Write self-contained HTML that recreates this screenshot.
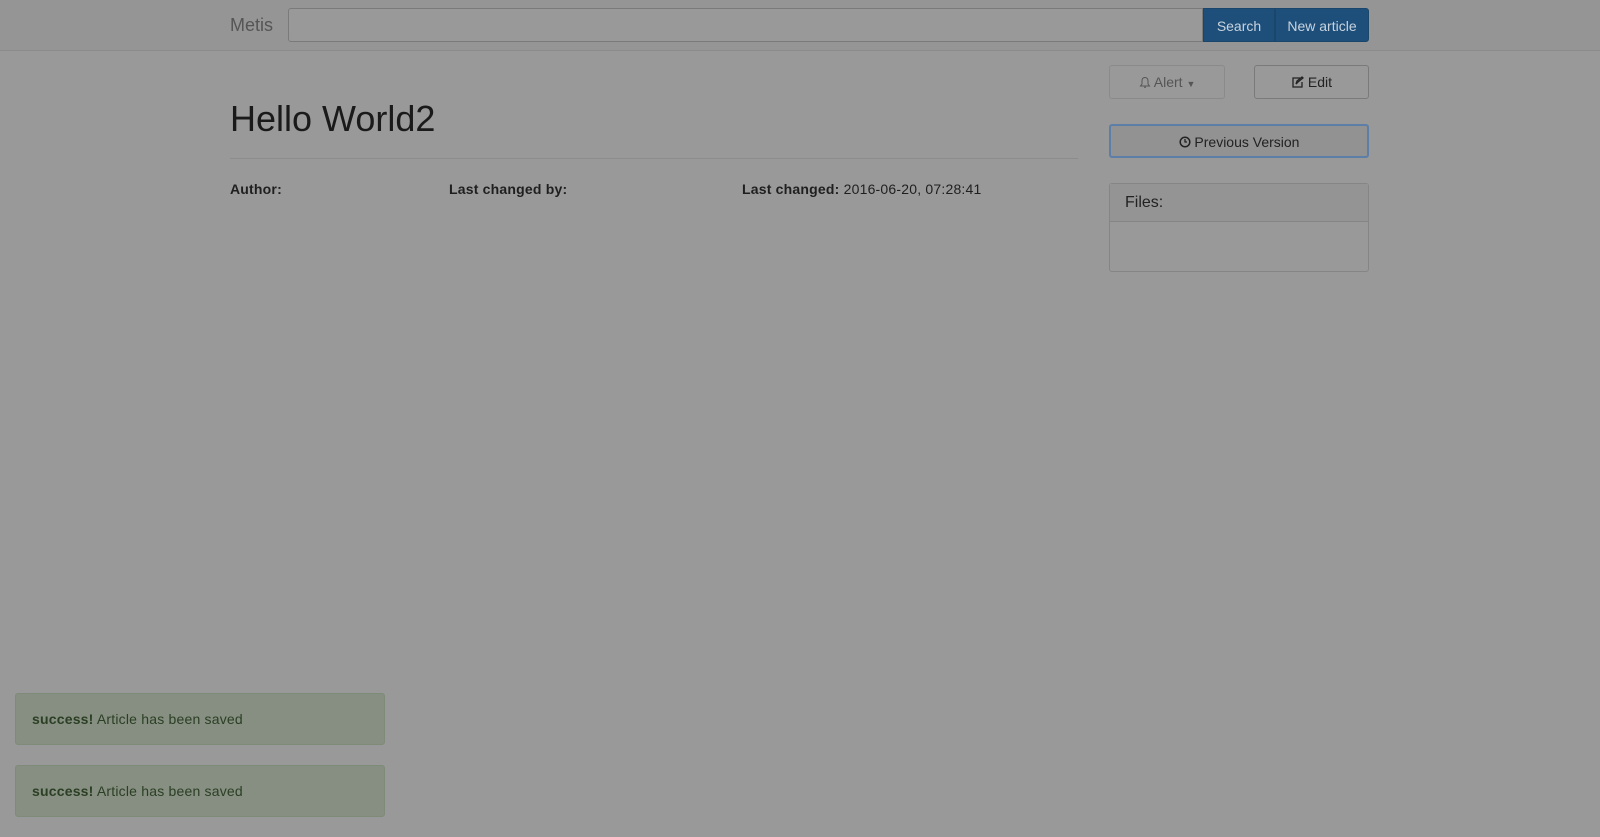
<!DOCTYPE html>
<html><head><style>
body{margin:0;width:1600px;height:837px;background:#999;font-family:"Liberation Sans",sans-serif;font-size:14px;color:#1f1f1f;position:relative;overflow:hidden}
.nav{position:absolute;left:0;top:0;width:1600px;height:50px;background:#959595;border-bottom:1px solid #8a8a8a}
.brand{position:absolute;left:230px;top:15px;font-size:18px;color:#555}
.inp{position:absolute;left:288px;top:8px;width:915px;height:34px;border:1px solid #7a7a7a;border-radius:3px 0 0 3px;background:#999;box-sizing:border-box}
.b1,.b2{position:absolute;top:8px;height:34px;background:#1e4f7a;color:#c8d3de;line-height:34px;text-align:center;box-sizing:border-box;border:1px solid #1a466b}
.b1{left:1203px;width:72px}
.b2{left:1275px;width:94px;border-radius:0 3px 3px 0}
.btn{position:absolute;border:1px solid #7a7a7a;border-radius:3px;box-sizing:border-box;text-align:center;color:#222}
h1{position:absolute;left:230px;top:98px;margin:0;font-size:36px;font-weight:normal;color:#1a1a1a}
.hr{position:absolute;left:230px;top:158px;width:848px;height:1px;background:#8c8c8c}
.meta{position:absolute;top:181px;letter-spacing:0.2px}
.panel{position:absolute;left:1109px;top:183px;width:260px;height:89px;border:1px solid #858585;border-radius:3px;box-sizing:border-box}
.ph{height:37px;background:#949494;border-bottom:1px solid #858585;font-size:16px;line-height:37px;padding-left:15px;color:#222}
.al{position:absolute;left:15px;width:370px;height:52px;background:#868f81;border:1px solid #7f8b79;border-radius:3px;box-sizing:border-box;line-height:50px;padding-left:16px;color:#2b3f24;letter-spacing:0.2px}
</style></head><body>
<div class="nav"><div class="brand">Metis</div><div class="inp"></div><div class="b1">Search</div><div class="b2">New article</div></div>
<div class="btn" style="left:1109px;top:65px;width:116px;height:34px;line-height:32px;color:#555;border-color:#8a8a8a">
<svg width="12" height="13" viewBox="0 0 12 13" style="vertical-align:-2px"><path d="M6 1.5C3.8 1.5 3 3.2 3 5v3L1.5 10h9L9 8V5C9 3.2 8.2 1.5 6 1.5zM5 11.2h2" fill="none" stroke="#555" stroke-width="1"/></svg> Alert <span style="font-size:9px">&#9660;</span></div>
<div class="btn" style="left:1254px;top:65px;width:115px;height:34px;line-height:32px">
<svg width="13" height="13" viewBox="0 0 13 13" style="vertical-align:-2px"><path d="M9 2H2v9h9V6M5 8l1-3 5-4 1 1-5 4z" fill="none" stroke="#222" stroke-width="1.3"/></svg> Edit</div>
<div class="btn" style="left:1109px;top:124px;width:260px;height:34px;line-height:32px;border:2px solid #5d7ea6;background:#929292">
<svg width="12" height="12" viewBox="0 0 12 12" style="vertical-align:-1px"><circle cx="6" cy="6" r="4.8" fill="none" stroke="#222" stroke-width="1.5"/><path d="M6 3v3h2" fill="none" stroke="#222" stroke-width="1.3"/></svg> Previous Version</div>
<h1>Hello World2</h1>
<div class="hr"></div>
<div class="meta" style="left:230px"><b>Author:</b></div>
<div class="meta" style="left:449px"><b>Last changed by:</b></div>
<div class="meta" style="left:742px"><b>Last changed:</b> 2016-06-20, 07:28:41</div>
<div class="panel"><div class="ph">Files:</div></div>
<div class="al" style="top:693px"><b>success!</b> Article has been saved</div>
<div class="al" style="top:765px"><b>success!</b> Article has been saved</div>
</body></html>
